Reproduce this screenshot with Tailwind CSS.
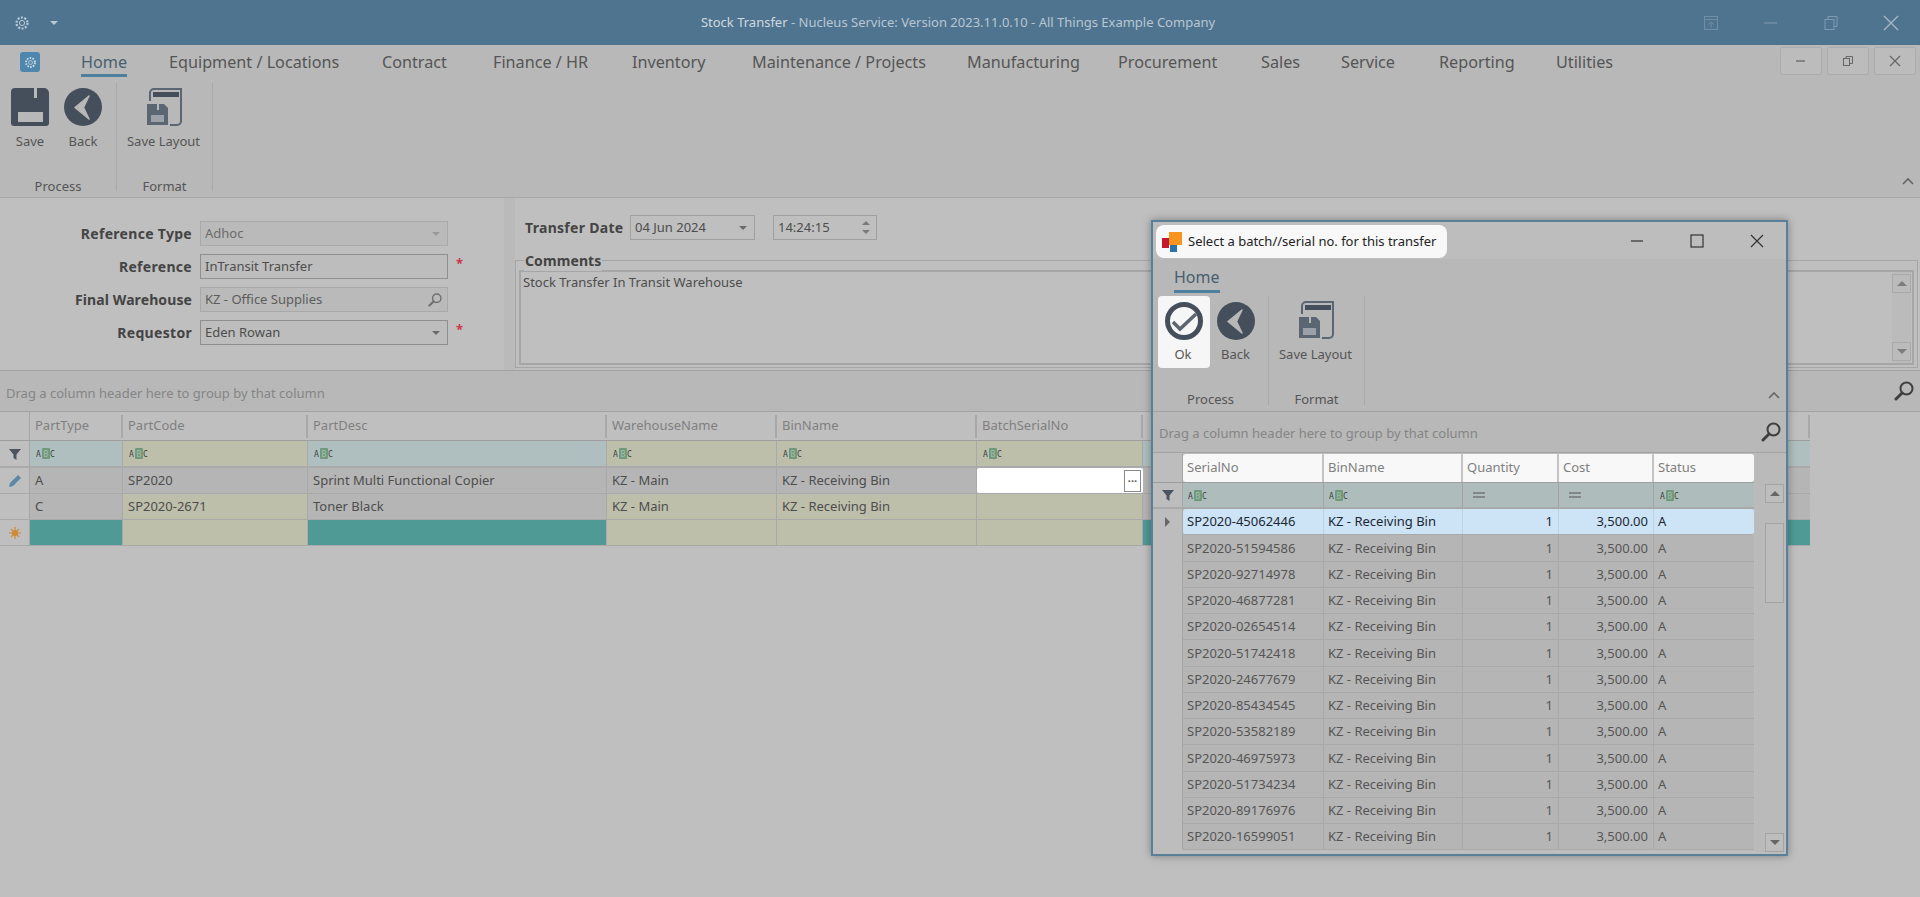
<!DOCTYPE html>
<html lang="en">
<head>
    <meta charset="UTF-8">
    <title>Stock Transfer</title>
    <script src="https://cdn.jsdelivr.net/npm/@tailwindcss/browser@4"></script>
</head>
<body class="relative h-[897px] w-[1920px] overflow-hidden bg-[#bfbfbf] font-['Noto_Sans',sans-serif] text-[13px] text-[#4d4d4d]">

    <!-- shared icons -->
    <svg class="hidden">
        <symbol id="abc" viewBox="0 0 19 11">
            <rect x="6" width="8" height="11" rx="1" fill="#6f9a7c"/>
            <text x="0" y="8.5" font-size="8" font-family="DejaVu Sans Mono" fill="#3d3d3d">A</text>
            <text x="7.5" y="8.5" font-size="8" font-family="DejaVu Sans Mono" fill="#a7bdb0">B</text>
            <text x="14" y="8.5" font-size="8" font-family="DejaVu Sans Mono" fill="#3d3d3d">C</text>
        </symbol>
        <symbol id="back" viewBox="0 0 38 38">
            <circle cx="19" cy="19" r="19" fill="#454f5b"/>
            <path d="M25 8 L11 19.5 L25 31 L19.5 19.5 Z" fill="#b8b8b8" stroke="#b8b8b8" stroke-width="1.5" stroke-linejoin="round"/>
        </symbol>
        <symbol id="layout" viewBox="0 0 37 39">
            <path d="M4 13V5a4 4 0 0 1 4-4h27v32a4 4 0 0 1-4 4h-7" fill="none" stroke="#5a6672" stroke-width="2"/>
            <rect x="7" y="4" width="26" height="5" fill="#454f5b"/>
            <path d="M1 16h17l4 4v17H1z" fill="#5a6672"/>
            <rect x="11" y="16" width="2" height="6" fill="#b8b8b8"/>
            <rect x="5" y="27" width="13" height="7" fill="#9aa1a8"/>
        </symbol>
        <symbol id="lens" viewBox="0 0 20 20">
            <circle cx="12.5" cy="7.5" r="6" fill="none" stroke="#3f3f3f" stroke-width="2"/>
            <path d="M8 12 L2 18" stroke="#3f3f3f" stroke-width="3" stroke-linecap="round"/>
        </symbol>
        <symbol id="funnel" viewBox="0 0 12 12">
            <path d="M0 1h12L7.5 6.5V12L4.5 10V6.5z" fill="#4b5560"/>
        </symbol>
    </svg>

    <!-- title bar -->
    <header class="flex h-[45px] items-center justify-between bg-[#4f7490]">
        <div class="flex w-[400px] items-center pl-[14px]">
            <svg class="h-4 w-4" viewBox="0 0 16 16" fill="none" stroke="#b9c8d3"><circle cx="8" cy="8" r="5.5" stroke-width="2.2" stroke-dasharray="2 1.45"/><circle cx="8" cy="8" r="2.6"/></svg>
            <span class="ml-[20px] h-0 w-0 border-x-[4px] border-t-[4px] border-x-transparent border-t-[#b9c8d3]"></span>
        </div>
        <div class="-ml-[4px] text-[#b9c6d0]"><span class="text-[#d0d9df]">Stock Transfer</span> - Nucleus Service: Version 2023.11.0.10 - All Things Example Company</div>
        <div class="flex w-[400px] items-center justify-end gap-[44px] pr-[21px]">
            <svg class="h-4 w-4" viewBox="0 0 16 16" fill="none" stroke="#6f8ea6"><rect x="1.5" y="1.5" width="13" height="13"/><path d="M1.5 4.5h13M8 13V7M5.5 9.5 8 7l2.5 2.5"/></svg>
            <svg class="h-4 w-4" viewBox="0 0 16 16" stroke="#6f8ea6" stroke-width="1.5"><path d="M1 8h13"/></svg>
            <svg class="h-4 w-4" viewBox="0 0 16 16" fill="none" stroke="#7f9bb0"><rect x="2" y="4.5" width="9" height="10"/><path d="M5 4.5V1.5h9v10h-3"/></svg>
            <svg class="h-4 w-4" viewBox="0 0 16 16" stroke="#a3b7c6" stroke-width="1.4"><path d="M1 1l14 14M15 1 1 15"/></svg>
        </div>
    </header>

    <!-- ribbon tabs -->
    <nav class="flex h-[37px] items-center bg-[#b8b8b8] pb-[3px] pl-[20px] text-[16.2px] text-[#555]">
        <div class="mr-[41px] flex h-5 w-5 items-center justify-center rounded-[3px] bg-[#4f86ad]">
            <svg class="h-[13px] w-[13px]" viewBox="0 0 16 16" fill="none" stroke="#c9d9e4"><circle cx="8" cy="8" r="5.5" stroke-width="2.4" stroke-dasharray="2 1.45"/><circle cx="8" cy="8" r="2.4"/></svg>
        </div>
        <div class="flex items-center whitespace-nowrap">
            <div class="w-[88px]"><span class="relative inline-block text-[#47606f]">Home<span class="absolute -bottom-[3px] left-0 h-[3px] w-full bg-[#4f7f9f]"></span></span></div>
            <div class="w-[213px]">Equipment / Locations</div>
            <div class="w-[111px]">Contract</div>
            <div class="w-[139px]">Finance / HR</div>
            <div class="w-[120px]">Inventory</div>
            <div class="w-[215px]">Maintenance / Projects</div>
            <div class="w-[151px]">Manufacturing</div>
            <div class="w-[143px]">Procurement</div>
            <div class="w-[80px]">Sales</div>
            <div class="w-[98px]">Service</div>
            <div class="w-[117px]">Reporting</div>
            <div>Utilities</div>
        </div>
    </nav>
    <div class="absolute right-[4px] top-[47px] flex gap-[5px]">
        <button class="flex h-[28px] w-[42px] items-center justify-center rounded-[2px] border border-[#acacac] bg-[#bcbcbc]"><svg class="h-3 w-3" viewBox="0 0 12 12" stroke="#666" stroke-width="1.3"><path d="M1 6h9"/></svg></button>
        <button class="flex h-[28px] w-[42px] items-center justify-center rounded-[2px] border border-[#acacac] bg-[#bcbcbc]"><svg class="h-3 w-3" viewBox="0 0 12 12" fill="none" stroke="#666"><rect x="1.5" y="3.5" width="6" height="7"/><path d="M4 3.5v-2h6.5v7h-3"/></svg></button>
        <button class="flex h-[28px] w-[42px] items-center justify-center rounded-[2px] border border-[#acacac] bg-[#bcbcbc]"><svg class="h-3 w-3" viewBox="0 0 12 12" stroke="#666" stroke-width="1.2"><path d="M1 1l10 10M11 1 1 11"/></svg></button>
    </div>

    <!-- ribbon -->
    <section class="relative flex h-[116px] border-b border-[#a8a8a8] bg-[#b8b8b8] pt-px text-[#555]">
        <div class="flex h-[108px] w-[117px] flex-col border-r border-[#a9a9a9]">
            <div class="flex h-[95px] pl-[4px] pt-[5px]">
                <div class="flex w-[52px] flex-col items-center">
                    <svg class="h-[38px] w-[38px]" viewBox="0 0 38 38"><path d="M4 0h29a5 5 0 0 1 5 5v30a3 3 0 0 1-3 3H3a3 3 0 0 1-3-3V4a4 4 0 0 1 4-4z" fill="#454f5b"/><rect x="23" width="3" height="10" fill="#b8b8b8"/><rect x="7" y="24" width="25" height="10" fill="#b8b8b8"/></svg>
                    <span class="mt-[5px] leading-5">Save</span>
                </div>
                <div class="flex w-[54px] flex-col items-center">
                    <svg class="h-[38px] w-[38px]"><use href="#back"/></svg>
                    <span class="mt-[5px] leading-5">Back</span>
                </div>
            </div>
            <div class="h-[13px] text-center leading-[16px]">Process</div>
        </div>
        <div class="flex h-[108px] w-[96px] flex-col border-r border-[#a9a9a9]">
            <div class="flex h-[95px] flex-col items-center pt-[5px]">
                <svg class="h-[39px] w-[37px]"><use href="#layout"/></svg>
                <span class="mt-[4px] -translate-x-px leading-5">Save Layout</span>
            </div>
            <div class="h-[13px] text-center leading-[16px]">Format</div>
        </div>
        <svg class="absolute bottom-[12px] right-[6px] h-[8px] w-[12px]" viewBox="0 0 12 8" fill="none" stroke="#666" stroke-width="1.6"><path d="M1 7l5-5 5 5"/></svg>
    </section>

    <!-- header form -->
    <section class="flex h-[172px]">
        <div class="flex w-[504px] flex-col gap-[8px] pt-[23px]">
            <div class="flex h-[25px] items-center">
                <label class="w-[192px] text-right text-[14px] font-bold tracking-[0.3px] text-[#444]">Reference Type</label>
                <div class="ml-[8px] flex h-[25px] w-[248px] items-center justify-between border border-[#a9a9a9] bg-[#bababa] pl-[4px] pr-[7px] text-[#6a6a6a]">Adhoc<span class="h-0 w-0 border-x-[4px] border-t-[4px] border-x-transparent border-t-[#9a9a9a]"></span></div>
            </div>
            <div class="flex h-[25px] items-center">
                <label class="w-[192px] text-right text-[14px] font-bold tracking-[0.3px] text-[#444]">Reference</label>
                <div class="ml-[8px] flex h-[25px] w-[248px] items-center border border-[#8f8f8f] bg-[#bdbdbd] pl-[4px]">InTransit Transfer</div>
                <span class="ml-[8px] -mt-[6px] text-[13px] font-bold text-[#c8384a]">*</span>
            </div>
            <div class="flex h-[25px] items-center">
                <label class="w-[192px] text-right text-[14px] font-bold tracking-[0.1px] text-[#444]">Final Warehouse</label>
                <div class="ml-[8px] flex h-[25px] w-[248px] items-center justify-between border border-[#a9a9a9] bg-[#bababa] pl-[4px] pr-[5px] text-[#5c5c5c]">KZ - Office Supplies<svg class="h-[14px] w-[14px] opacity-60"><use href="#lens"/></svg></div>
            </div>
            <div class="flex h-[25px] items-center">
                <label class="w-[192px] text-right text-[14px] font-bold tracking-[0.3px] text-[#444]">Requestor</label>
                <div class="ml-[8px] flex h-[25px] w-[248px] items-center justify-between border border-[#8f8f8f] bg-[#bdbdbd] pl-[4px] pr-[7px]">Eden Rowan<span class="h-0 w-0 border-x-[4px] border-t-[4px] border-x-transparent border-t-[#6a6a6a]"></span></div>
                <span class="ml-[8px] -mt-[6px] text-[13px] font-bold text-[#c8384a]">*</span>
            </div>
        </div>
        <div class="w-[11px] bg-[#bababa]"></div>
        <div class="flex-1 pt-[17px]">
            <div class="flex h-[25px] items-center pl-[10px]">
                <label class="w-[105px] text-[14px] font-bold tracking-[0.3px] text-[#444]">Transfer Date</label>
                <div class="flex h-[25px] w-[125px] items-center justify-between border border-[#a0a0a0] pl-[4px] pr-[7px]">04 Jun 2024<span class="h-0 w-0 border-x-[4px] border-t-[4px] border-x-transparent border-t-[#6a6a6a]"></span></div>
                <div class="ml-[18px] flex h-[25px] w-[104px] items-center justify-between border border-[#a0a0a0] pl-[4px] pr-[6px]">14:24:15
                    <span class="flex flex-col gap-[5px]"><span class="h-0 w-0 border-x-[4px] border-b-[4px] border-x-transparent border-b-[#7a7a7a]"></span><span class="h-0 w-0 border-x-[4px] border-t-[4px] border-x-transparent border-t-[#7a7a7a]"></span></span>
                </div>
            </div>
            <div class="relative mt-[20px] mr-[2px] h-[108px] border border-[#a6a6a6] px-[3px] pb-[2px] pt-[9px]">
                <span class="absolute -top-[11px] left-[8px] bg-[#bfbfbf] px-px text-[14px] font-bold tracking-[0.1px] text-[#444]">Comments</span>
                <div class="flex h-[95px] justify-between border-2 border-[#a6a6a6] pl-[2px] pr-[1px]">
                    <span class="leading-[20px]">Stock Transfer In Transit Warehouse</span>
                    <div class="flex w-[19px] flex-col justify-between bg-[#bbbbbb] py-[2px]">
                        <div class="flex h-[19px] items-center justify-center border border-[#a9a9a9]"><span class="h-0 w-0 border-x-[5px] border-b-[5px] border-x-transparent border-b-[#7d7d7d]"></span></div>
                        <div class="flex h-[19px] items-center justify-center border border-[#a9a9a9]"><span class="h-0 w-0 border-x-[5px] border-t-[5px] border-x-transparent border-t-[#7d7d7d]"></span></div>
                    </div>
                </div>
            </div>
        </div>
    </section>

    <!-- grid group panel -->
    <div class="flex h-[42px] items-center justify-between border-y border-[#a2a2a2] bg-[#b8b8b8] pl-[6px] pr-[6px] text-[#858585]">
        <span class="pt-[5px]">Drag a column header here to group by that column</span>
        <svg class="h-5 w-5"><use href="#lens"/></svg>
    </div>

    <!-- main grid -->
    <div class="w-[1810px]">
        <div class="grid h-[29px] grid-cols-[30px_93px_185px_299px_170px_200px_166px_667px] items-center border-b border-[#9e9e9e] text-[#7f7f7f]">
            <div class="h-full border-r border-[#a6a6a6]"></div>
            <div class="h-[23px] border-r-2 border-[#a9a9a9] pl-[5px] leading-[21px]">PartType</div>
            <div class="h-[23px] border-r-2 border-[#a9a9a9] pl-[5px] leading-[21px]">PartCode</div>
            <div class="h-[23px] border-r-2 border-[#a9a9a9] pl-[5px] leading-[21px]">PartDesc</div>
            <div class="h-[23px] border-r-2 border-[#a9a9a9] pl-[5px] leading-[21px]">WarehouseName</div>
            <div class="h-[23px] border-r-2 border-[#a9a9a9] pl-[5px] leading-[21px]">BinName</div>
            <div class="h-[23px] border-r-2 border-[#a9a9a9] pl-[5px] leading-[21px]">BatchSerialNo</div>
            <div class="h-[23px] border-r-2 border-[#a9a9a9]"></div>
        </div>
        <div class="grid h-[27px] grid-cols-[30px_93px_185px_299px_170px_200px_166px_667px] border-b-2 border-[#aaaaaa]">
            <div class="flex items-center justify-center border-r border-[#a6a6a6]"><svg class="h-3 w-3"><use href="#funnel"/></svg></div>
            <div class="flex items-center border-r border-[#a9a9a9] bg-[#afbfbf] pl-[6px]"><svg class="h-[11px] w-[19px]"><use href="#abc"/></svg></div>
            <div class="flex items-center border-r border-[#a9a9a9] bg-[#bdbfab] pl-[6px]"><svg class="h-[11px] w-[19px]"><use href="#abc"/></svg></div>
            <div class="flex items-center border-r border-[#a9a9a9] bg-[#afbfbf] pl-[6px]"><svg class="h-[11px] w-[19px]"><use href="#abc"/></svg></div>
            <div class="flex items-center border-r border-[#a9a9a9] bg-[#bdbfab] pl-[6px]"><svg class="h-[11px] w-[19px]"><use href="#abc"/></svg></div>
            <div class="flex items-center border-r border-[#a9a9a9] bg-[#bdbfab] pl-[6px]"><svg class="h-[11px] w-[19px]"><use href="#abc"/></svg></div>
            <div class="flex items-center border-r border-[#a9a9a9] bg-[#bdbfab] pl-[6px]"><svg class="h-[11px] w-[19px]"><use href="#abc"/></svg></div>
            <div class="bg-[#afbfbf]"></div>
        </div>
        <div class="grid h-[26px] grid-cols-[30px_93px_185px_299px_170px_200px_166px_667px] border-b border-[#a9a9a9]">
            <div class="flex items-center justify-center border-r border-[#a6a6a6]"><svg class="h-3 w-3" viewBox="0 0 12 12"><path d="M9 0l3 3-8 8-4 1 1-4z" fill="#5d87a6"/></svg></div>
            <div class="flex items-center border-r border-[#a9a9a9] bg-[#b5b5b5] pl-[5px] pt-px">A</div>
            <div class="flex items-center border-r border-[#a9a9a9] bg-[#b5b5b5] pl-[5px] pt-px">SP2020</div>
            <div class="flex items-center border-r border-[#a9a9a9] bg-[#b5b5b5] pl-[5px] pt-px">Sprint Multi Functional Copier</div>
            <div class="flex items-center border-r border-[#a9a9a9] bg-[#b5b5b5] pl-[5px] pt-px">KZ - Main</div>
            <div class="flex items-center border-r border-[#a9a9a9] bg-[#b5b5b5] pl-[5px] pt-px">KZ - Receiving Bin</div>
            <div class="flex items-center justify-end rounded-[2px] bg-white pr-[2px]"><span class="flex h-[22px] w-[17px] items-center justify-center border border-[#8a8a8a] pb-[6px] text-[11px] font-bold leading-none text-[#555]">...</span></div>
            <div class="bg-[#b5b5b5]"></div>
        </div>
        <div class="grid h-[26px] grid-cols-[30px_93px_185px_299px_170px_200px_166px_667px] border-b border-[#a9a9a9]">
            <div class="border-r border-[#a6a6a6]"></div>
            <div class="flex items-center border-r border-[#a9a9a9] bg-[#b5b5b5] pl-[5px] pt-px">C</div>
            <div class="flex items-center border-r border-[#a9a9a9] bg-[#bdbfab] pl-[5px] pt-px">SP2020-2671</div>
            <div class="flex items-center border-r border-[#a9a9a9] bg-[#b5b5b5] pl-[5px] pt-px">Toner Black</div>
            <div class="flex items-center border-r border-[#a9a9a9] bg-[#bdbfab] pl-[5px] pt-px">KZ - Main</div>
            <div class="flex items-center border-r border-[#a9a9a9] bg-[#bdbfab] pl-[5px] pt-px">KZ - Receiving Bin</div>
            <div class="border-r border-[#a9a9a9] bg-[#bdbfab]"></div>
            <div class="bg-[#b5b5b5]"></div>
        </div>
        <div class="grid h-[26px] grid-cols-[30px_93px_185px_299px_170px_200px_166px_667px] border-b border-[#a9a9a9]">
            <div class="flex items-center justify-center border-r border-[#a6a6a6]"><svg class="h-3 w-3" viewBox="0 0 12 12" stroke="#d08a35" stroke-width="1.2"><path d="M6 0v12M0 6h12M1.8 1.8l8.4 8.4M10.2 1.8l-8.4 8.4"/><circle cx="6" cy="6" r="3" fill="#d08a35" stroke="none"/></svg></div>
            <div class="border-r border-[#a9a9a9] bg-[#4f9a94]"></div>
            <div class="border-r border-[#a9a9a9] bg-[#bdbfab]"></div>
            <div class="border-r border-[#a9a9a9] bg-[#4f9a94]"></div>
            <div class="border-r border-[#a9a9a9] bg-[#bdbfab]"></div>
            <div class="border-r border-[#a9a9a9] bg-[#bdbfab]"></div>
            <div class="border-r border-[#a9a9a9] bg-[#bdbfab]"></div>
            <div class="bg-[#4f9a94]"></div>
        </div>
    </div>

    <!-- batch/serial dialog -->
    <div class="absolute left-[1151px] top-[220px] h-[636px] w-[637px] overflow-hidden border-2 border-[#5a7f99] bg-[#bdbdbd] shadow-[0_0_8px_rgba(0,0,0,0.35)]">
        <div class="flex h-[37px] items-start justify-between">
            <div class="ml-[3px] mt-[3px] flex h-[33px] w-[291px] items-center rounded-lg bg-[#f8f8f8] pl-[6px] text-[#222]">
                <svg class="mr-[6px] h-[20px] w-[20px]" viewBox="0 0 20 20"><rect y="6" width="7" height="10" fill="#c4182f"/><rect x="7" width="13" height="13" fill="#f7941d"/><rect x="8" y="13" width="7" height="7" fill="#2a73a8"/></svg>
                Select a batch//serial no. for this transfer
            </div>
            <div class="flex h-[37px] items-center gap-[44px] pr-[21px]">
                <svg class="h-4 w-4" viewBox="0 0 16 16" stroke="#333" stroke-width="1.2"><path d="M2 8h12"/></svg>
                <svg class="h-4 w-4" viewBox="0 0 16 16" fill="none" stroke="#333" stroke-width="1.2"><rect x="2" y="2" width="12" height="12"/></svg>
                <svg class="h-4 w-4" viewBox="0 0 16 16" stroke="#333" stroke-width="1.2"><path d="M2 2l12 12M14 2 2 14"/></svg>
            </div>
        </div>
        <div class="h-[37px] bg-[#b8b8b8] pl-[21px] pt-[6px] text-[16px]">
            <span class="inline-block h-[25px] border-b-[3px] border-[#4f7f9f] leading-[19px] text-[#47606f]">Home</span>
        </div>
        <div class="relative flex h-[116px] border-b border-[#a2a2a2] bg-[#b8b8b8] text-[#555]">
            <div class="flex h-[109px] w-[116px] flex-col border-r border-[#a9a9a9]">
                <div class="flex h-[96px] pl-[5px]">
                    <div class="flex h-[72px] w-[52px] flex-col items-center rounded-[4px] bg-[#f6f6f6] pt-[6px]">
                        <svg class="h-[38px] w-[38px]" viewBox="0 0 38 38" fill="none"><circle cx="19" cy="19" r="16.5" stroke="#454f5b" stroke-width="5"/><path d="M8 20l7 7 16-15" stroke="#5a6672" stroke-width="3.5"/></svg>
                        <span class="mt-[4px] -translate-x-px leading-5">Ok</span>
                    </div>
                    <div class="flex w-[51px] flex-col items-center pt-[6px]">
                        <svg class="h-[38px] w-[38px]"><use href="#back"/></svg>
                        <span class="mt-[4px] leading-5">Back</span>
                    </div>
                </div>
                <div class="h-[13px] text-center leading-[15px]">Process</div>
            </div>
            <div class="flex h-[109px] w-[96px] flex-col border-r border-[#a9a9a9]">
                <div class="flex h-[96px] flex-col items-center pt-[5px]">
                    <svg class="h-[39px] w-[37px]"><use href="#layout"/></svg>
                    <span class="mt-[4px] -translate-x-px leading-5">Save Layout</span>
                </div>
                <div class="h-[13px] text-center leading-[15px]">Format</div>
            </div>
            <svg class="absolute bottom-[12px] right-[6px] h-[8px] w-[12px]" viewBox="0 0 12 8" fill="none" stroke="#666" stroke-width="1.6"><path d="M1 7l5-5 5 5"/></svg>
        </div>
        <div class="flex h-[41px] items-center justify-between border-b border-[#a2a2a2] bg-[#b8b8b8] pl-[6px] pr-[5px] text-[#858585]">
            <span class="pt-[4px]">Drag a column header here to group by that column</span>
            <svg class="h-5 w-5"><use href="#lens"/></svg>
        </div>
        <div class="flex">
            <div class="w-[601px]">
                <div class="grid h-[30px] grid-cols-[30px_141px_139px_96px_95px_100px] border-b border-[#9e9e9e] pt-px text-[#7f7f7f]">
                    <div class="border-r border-[#a6a6a6]"></div>
                    <div class="flex items-center rounded-l-[3px] border-r-2 border-[#c4c4c4] bg-[#f8f8f8] pl-[4px]">SerialNo</div>
                    <div class="flex items-center border-r-2 border-[#c4c4c4] bg-[#f8f8f8] pl-[4px]">BinName</div>
                    <div class="flex items-center border-r-2 border-[#c4c4c4] bg-[#f8f8f8] pl-[4px]">Quantity</div>
                    <div class="flex items-center border-r-2 border-[#c4c4c4] bg-[#f8f8f8] pl-[4px]">Cost</div>
                    <div class="flex items-center rounded-r-[3px] bg-[#f8f8f8] pl-[4px]">Status</div>
                </div>
                <div class="grid h-[26px] grid-cols-[30px_141px_139px_96px_95px_100px] border-b-2 border-[#a9a9a9]">
                    <div class="flex items-center justify-center border-r border-[#a6a6a6]"><svg class="h-3 w-3"><use href="#funnel"/></svg></div>
                    <div class="flex items-center border-r border-[#a3a3a3] bg-[#aebcbb] pl-[5px]"><svg class="h-[11px] w-[19px]"><use href="#abc"/></svg></div>
                    <div class="flex items-center border-r border-[#a3a3a3] bg-[#aebcbb] pl-[5px]"><svg class="h-[11px] w-[19px]"><use href="#abc"/></svg></div>
                    <div class="flex items-center border-r border-[#a3a3a3] bg-[#aebcbb] pl-[10px]"><svg class="h-[6px] w-[12px]" viewBox="0 0 12 6" stroke="#555"><path d="M0 1h12M0 5h12"/></svg></div>
                    <div class="flex items-center border-r border-[#a3a3a3] bg-[#aebcbb] pl-[10px]"><svg class="h-[6px] w-[12px]" viewBox="0 0 12 6" stroke="#555"><path d="M0 1h12M0 5h12"/></svg></div>
                    <div class="flex items-center bg-[#aebcbb] pl-[6px]"><svg class="h-[11px] w-[19px]"><use href="#abc"/></svg></div>
                </div>
                <div id="serials"></div>
            </div>
            <div class="ml-px w-[30px] bg-[#bababa] pl-[10px] pt-[31px]">
                <div class="flex h-[19px] w-[19px] items-center justify-center border border-[#a3a3a3] bg-[#bdbdbd]"><span class="h-0 w-0 border-x-[5px] border-b-[5px] border-x-transparent border-b-[#666]"></span></div>
                <div class="mt-[20px] h-[80px] w-[19px] border border-[#a3a3a3] bg-[#bdbdbd]"></div>
                <div class="mt-[230px] flex h-[19px] w-[19px] items-center justify-center border border-[#a3a3a3] bg-[#bdbdbd]"><span class="h-0 w-0 border-x-[5px] border-t-[5px] border-x-transparent border-t-[#666]"></span></div>
            </div>
        </div>
    </div>

    <script>
        const serials = ["45062446", "51594586", "92714978", "46877281", "02654514", "51742418", "24677679", "85434545", "53582189", "46975973", "51734234", "89176976", "16599051"];
        document.getElementById("serials").innerHTML = serials.map((no, i) => {
            const first = i === 0;
            const rowClass = first ? "bg-[#cde4f7] text-[#1c2733] rounded-[3px]" : "bg-[#b5b5b5] text-[#555]";
            const line = first ? "border-[#bcd3e6]" : "border-[#a9a9a9]";
            const arrow = first ? '<span class="h-0 w-0 border-y-[5px] border-l-[5px] border-y-transparent border-l-[#666]"></span>' : "";
            return `<div class="flex h-[26.25px]">
                <div class="flex w-[30px] items-center justify-center border-r border-[#a6a6a6]">${arrow}</div>
                <div class="grid w-[571px] grid-cols-[141px_139px_96px_95px_100px] border-b border-[#a9a9a9] ${rowClass}">
                    <div class="flex items-center border-r pl-[4px] pt-px ${line}">SP2020-${no}</div>
                    <div class="flex items-center border-r pl-[4px] pt-px ${line}">KZ - Receiving Bin</div>
                    <div class="flex items-center justify-end border-r pr-[5px] pt-px ${line}">1</div>
                    <div class="flex items-center justify-end border-r pr-[5px] pt-px ${line}">3,500.00</div>
                    <div class="flex items-center pl-[4px] pt-px">A</div>
                </div>
            </div>`;
        }).join("");
    </script>
</body>
</html>
